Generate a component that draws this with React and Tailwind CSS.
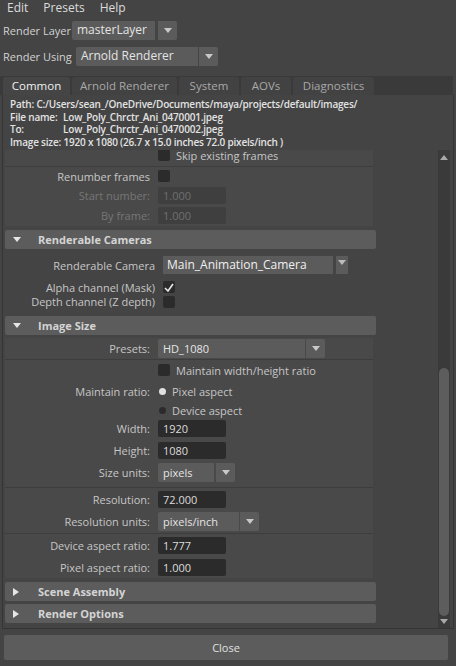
const FONT = "font-['Open_Sans',sans-serif]";

function Arrow({ dir = "down", className = "" }) {
  const pts = {
    down: "0,0 8,0 4,5",
    right: "0,0 6,4 0,8",
    up: "0,5 8,5 4,0",
  }[dir];
  const box = dir === "right" ? "0 0 6 8" : "0 0 8 5";
  const w = dir === "right" ? 6 : 8;
  const h = dir === "right" ? 8 : 5;
  return (
    <svg width={w} height={h} viewBox={box} className={className}>
      <polygon points={pts} fill="currentColor" />
    </svg>
  );
}

function Dropdown({ value, width, arrowGap = "ml-[3px]", textSize = "" }) {
  return (
    <div className="flex h-[19px] items-stretch">
      <div
        className={`flex items-center whitespace-nowrap rounded-l-[2px] bg-[#5b5b5b] pl-[5px] text-[#e4e4e4] ${textSize}`}
        style={{ width }}
      >
        {value}
      </div>
      <div className={`flex w-[19px] items-center justify-center rounded-r-[2px] bg-[#5b5b5b] text-[#c8c8c8] ${arrowGap}`}>
        <Arrow />
      </div>
    </div>
  );
}

function Field({ value, disabled }) {
  return (
    <div
      className={`flex h-[17px] w-[68px] items-center rounded-[2px] pl-[5px] ${
        disabled ? "bg-[#3f3f3f] text-[#6f6f6f]" : "bg-[#2b2b2b] text-[#dcdcdc]"
      }`}
    >
      {value}
    </div>
  );
}

function Check({ checked }) {
  return (
    <div className="flex h-[12px] w-[12px] shrink-0 items-center justify-center rounded-[2px] bg-[#2b2b2b]">
      {checked && (
        <svg width="10" height="9" viewBox="0 0 10 9">
          <path d="M1 5 L4 8 L9 1" fill="none" stroke="#e8e8e8" strokeWidth="1.6" />
        </svg>
      )}
    </div>
  );
}

function Row({ label, h, labelW = 153, disabled, children }) {
  return (
    <div className="flex items-center" style={{ height: h }}>
      <div
        className={`shrink-0 whitespace-nowrap pr-[8px] text-right ${disabled ? "text-[#767676]" : "text-[#c6c6c6]"}`}
        style={{ width: labelW }}
      >
        {label}
      </div>
      <div className="flex items-center whitespace-nowrap">{children}</div>
    </div>
  );
}

function Header({ title, open }) {
  return (
    <div className="flex h-[19px] w-[371px] items-center rounded-[2px] bg-[#5c5c5c] font-bold text-[#d4d4d4]">
      <div className="flex w-[33px] justify-start pl-[8px] text-[#e6e6e6]">
        {open ? <Arrow /> : <Arrow dir="right" />}
      </div>
      {title}
    </div>
  );
}

function Divider() {
  return <div className="h-px w-[368px] bg-[#3d3d3d]" />;
}

export default function App() {
  const tabs = [
    ["Common", "w-[67px]", true],
    ["Arnold Renderer", "w-[105px]"],
    ["System", "w-[60px]"],
    ["AOVs", "w-[50px]"],
    ["Diagnostics", "w-[81px]"],
  ];

  return (
    <div className={`flex h-[666px] w-[456px] flex-col overflow-hidden bg-[#444444] text-[11px] leading-none text-[#c8c8c8] ${FONT}`}>
      {/* menu */}
      <div className="flex h-[15px] items-center gap-[15px] pl-[7px] text-[12px] text-[#dcdcdc]">
        <span>Edit</span>
        <span>Presets</span>
        <span>Help</span>
      </div>

      <div className="mt-[5px] flex h-[20px] items-center whitespace-nowrap pl-[3px] text-[11px] text-[#d2d2d2]">
        <span className="w-[69px] shrink-0">Render Layer</span>
        <Dropdown value="masterLayer" width={83} textSize="text-[12px]" />
      </div>
      <div className="mt-[6px] flex h-[20px] items-center whitespace-nowrap pl-[3px] text-[11px] text-[#d2d2d2]">
        <span className="w-[73px] shrink-0">Render Using</span>
        <Dropdown value="Arnold Renderer" width={122} arrowGap="ml-[1px]" textSize="text-[12px]" />
      </div>

      {/* tabs */}
      <div className="mt-[10px] flex h-[19px] w-[453px] items-end gap-[2px] bg-[#3a3a3a] pl-[3px] text-[11.5px]">
        {tabs.map(([t, w, active]) => (
          <div
            key={t}
            className={`flex h-[18px] items-center justify-center rounded-t-[3px] ${w} ${
              active ? "bg-[#454545] text-[#f0f0f0]" : "bg-[#424242] text-[#a8a8a8]"
            }`}
          >
            {t}
          </div>
        ))}
      </div>

      {/* panel */}
      <div className="ml-[2px] flex h-[534px] w-[452px] flex-col border border-t-0 border-[#353535]">
        <div className="px-[7px] pt-[3px] text-[10px] font-semibold leading-[12.5px] tracking-[-0.2px] text-[#e2e2e2]">
          <div>Path: C:/Users/sean_/OneDrive/Documents/maya/projects/default/images/</div>
          <div className="flex">
            <span className="w-[53px]">File name:</span>
            <span>Low_Poly_Chrctr_Ani_0470001.jpeg</span>
          </div>
          <div className="flex">
            <span className="w-[53px]">To:</span>
            <span>Low_Poly_Chrctr_Ani_0470002.jpeg</span>
          </div>
          <div>Image size: 1920 x 1080 (26.7 x 15.0 inches 72.0 pixels/inch )</div>
        </div>

        <div className="mt-[2px] flex min-h-0 flex-1">
          {/* scrolled content */}
          <div className="min-w-0 flex-1 overflow-hidden pl-[2px]">
            <div className="-mt-[6px]">
              <div className="w-[368px] bg-[#494949]">
                <Row label="" h={22}>
                  <Check />
                  <span className="ml-[6px] text-[#c6c6c6]">Skip existing frames</span>
                </Row>
                <Divider />
                <Row label="Renumber frames" h={18}>
                  <Check />
                </Row>
                <Row label="Start number:" h={20} disabled>
                  <Field value="1.000" disabled />
                </Row>
                <Row label="By frame:" h={21} disabled>
                  <Field value="1.000" disabled />
                </Row>
              </div>

              <div className="mt-[4px]">
                <Header title="Renderable Cameras" open />
              </div>
              <div className="mt-[6px] w-[368px]">
                <Row label="Renderable Camera" h={20} labelW={158}>
                  <div className="flex h-[18px] items-stretch">
                    <div className="flex w-[170px] items-center bg-[#5b5b5b] pl-[4px] text-[12px] text-[#f0f0f0]">
                      Main_Animation_Camera
                    </div>
                    <div className="ml-[3px] flex w-[12px] items-start justify-center bg-[#5b5b5b] pt-[4px] text-[#bbbbbb]">
                      <Arrow />
                    </div>
                  </div>
                </Row>
                <div className="h-[5px]" />
                <Row label="Alpha channel (Mask)" h={14} labelW={158}>
                  <Check checked />
                </Row>
                <Row label="Depth channel (Z depth)" h={15} labelW={158}>
                  <Check />
                </Row>
              </div>

              <div className="mt-[7px]">
                <Header title="Image Size" open />
              </div>
              <div className="mt-[3px] w-[368px] bg-[#494949]">
                <Row label="Presets:" h={21}>
                  <Dropdown value="HD_1080" width={147} arrowGap="ml-[1px]" />
                </Row>
                <Divider />
                <Row label="" h={20}>
                  <Check />
                  <span className="ml-[6px] text-[#c6c6c6]">Maintain width/height ratio</span>
                </Row>
                <Row label="Maintain ratio:" h={22}>
                  <span className="ml-[1px] h-[7px] w-[7px] rounded-full bg-[#e0e0e0]" />
                  <span className="ml-[6px] text-[#c6c6c6]">Pixel aspect</span>
                </Row>
                <Row label="" h={16}>
                  <span className="ml-[1px] h-[7px] w-[7px] rounded-full bg-[#2b2b2b]" />
                  <span className="ml-[6px] text-[#c6c6c6]">Device aspect</span>
                </Row>
                <Row label="Width:" h={21}>
                  <Field value="1920" />
                </Row>
                <Row label="Height:" h={23}>
                  <Field value="1080" />
                </Row>
                <Row label="Size units:" h={20}>
                  <Dropdown value="pixels" width={56} arrowGap="ml-[2px]" />
                </Row>
                <div className="h-[5px]" />
                <Divider />
                <Row label="Resolution:" h={22}>
                  <Field value="72.000" />
                </Row>
                <Row label="Resolution units:" h={23}>
                  <Dropdown value="pixels/inch" width={81} arrowGap="ml-[1px]" />
                </Row>
                <Divider />
                <Row label="Device aspect ratio:" h={23}>
                  <Field value="1.777" />
                </Row>
                <Row label="Pixel aspect ratio:" h={21}>
                  <Field value="1.000" />
                </Row>
              </div>

              <div className="mt-[4px]">
                <Header title="Scene Assembly" />
              </div>
              <div className="mt-[3px]">
                <Header title="Render Options" />
              </div>
            </div>
          </div>

          {/* scrollbar */}
          <div className="mr-[3px] flex w-[12px] flex-col items-center bg-[#3a3a3a] pb-[4px] pt-[5px] text-[#a8a8a8]">
            <Arrow dir="up" />
            <div className="flex-1" />
            <div className="h-[248px] w-[10px] rounded-[5px] bg-[#5d5d5d]" />
            <div className="mt-[3px]">
              <Arrow />
            </div>
          </div>
        </div>
      </div>

      <div className="ml-[4px] mt-[6px] flex h-[25px] w-[444px] items-center justify-center rounded-[2px] bg-[#5c5c5c] text-[#e0e0e0]">
        Close
      </div>
    </div>
  );
}
